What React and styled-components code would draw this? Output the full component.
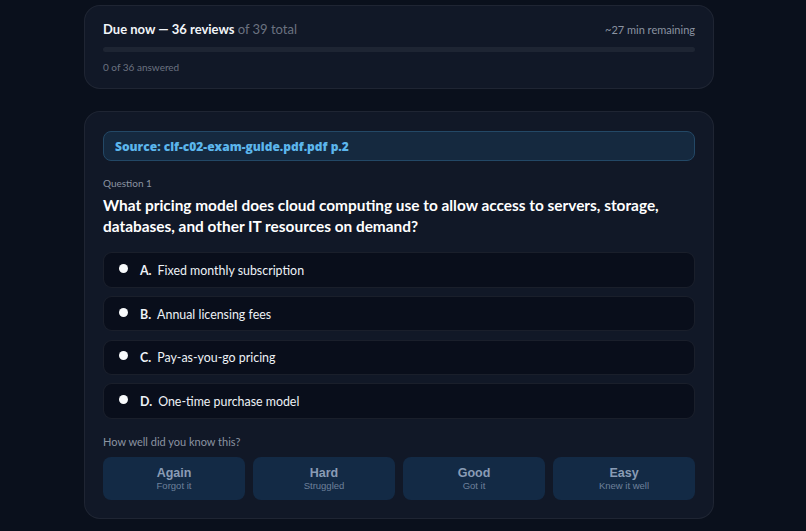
import styled, { createGlobalStyle } from "styled-components";

const GlobalStyle = createGlobalStyle`
    body {
        margin: 0;
        padding-right: 8px;
        background: #0a101c;
        font-family: Lato, "Open Sans", sans-serif;
        color: #e5e7eb;
    }
`

const Page = styled.div`
    width: 630px;
    margin: 0 auto;
    padding: 5px 0 12px;
    display: flex;
    flex-direction: column;
    gap: 22px;
`
const Card = styled.div`
    background: #111827;
    border: 1px solid rgba(255, 255, 255, 0.06);
    border-radius: 16px;
    padding: ${p => p.$pad};
`
const HeaderRow = styled.div`
    display: flex;
    justify-content: space-between;
    align-items: center;
    height: 20px;
`
const DueText = styled.div`
    font-size: 13px;
    font-weight: 700;
    color: #f1f5f9;
    span {
        font-weight: 400;
        color: #6b7280;
    }
`
const Remaining = styled.div`
    font-size: 11px;
    color: #8b93a1;
`
const Track = styled.div`
    height: 5px;
    border-radius: 3px;
    background: #1e2533;
    margin-top: 8px;
`
const Answered = styled.div`
    font-size: 10px;
    color: #6b7280;
    margin-top: 8px;
    line-height: 14px;
`
const Source = styled.div`
    height: 30px;
    box-sizing: border-box;
    display: flex;
    align-items: center;
    padding: 0 11px;
    background: #15293f;
    border: 1px solid #234866;
    border-radius: 8px;
    font-family: "Open Sans", sans-serif;
    font-size: 12px;
    font-weight: 800;
    color: #5cb6ec;
`
const QLabel = styled.div`
    font-size: 10px;
    color: #8b93a1;
    margin-top: 15px;
    line-height: 15px;
`
const QTitle = styled.div`
    font-size: 15.4px;
    font-weight: 700;
    color: #ffffff;
    line-height: 21px;
    margin-top: 4px;
`
const Options = styled.div`
    display: flex;
    flex-direction: column;
    gap: 8.3px;
    margin-top: 15px;
`
const Option = styled.div`
    height: 35.5px;
    box-sizing: border-box;
    display: flex;
    align-items: center;
    padding: 1px 0 0 15px;
    background: #090e1b;
    border: 1px solid rgba(255, 255, 255, 0.07);
    border-radius: 9px;
    font-size: 12.4px;
    color: #eef2f7;
`
const Dot = styled.span`
    width: 9px;
    height: 9px;
    border-radius: 50%;
    background: #f8fafc;
    margin-right: 12px;
    margin-top: -4px;
`
const Letter = styled.b`
    font-weight: 700;
    margin-right: 6px;
`
const Prompt = styled.div`
    font-size: 11px;
    color: #8b93a1;
    margin-top: 15px;
    line-height: 15px;
`
const Grades = styled.div`
    display: grid;
    grid-template-columns: repeat(4, 1fr);
    gap: 8px;
    margin-top: 8px;
`
const Grade = styled.button`
    height: 43px;
    border: none;
    border-radius: 8px;
    background: #132a45;
    font-family: "Liberation Sans", Arial, sans-serif;
    display: flex;
    flex-direction: column;
    align-items: center;
    justify-content: center;
    gap: 0;
    padding: 0;
`
const GradeName = styled.span`
    font-size: 12.5px;
    font-weight: 700;
    color: #8a9cb5;
`
const GradeHint = styled.span`
    font-size: 9.5px;
    color: #6e819b;
`

const options = [
    ["A.", "Fixed monthly subscription"],
    ["B.", "Annual licensing fees"],
    ["C.", "Pay-as-you-go pricing"],
    ["D.", "One-time purchase model"],
]
const grades = [
    ["Again", "Forgot it"],
    ["Hard", "Struggled"],
    ["Good", "Got it"],
    ["Easy", "Knew it well"],
]

export default function App() {
    return (
        <Page>
            <GlobalStyle />
            <Card $pad="13px 18px 14px">
                <HeaderRow>
                    <DueText>Due now — 36 reviews <span>of 39 total</span></DueText>
                    <Remaining>~27 min remaining</Remaining>
                </HeaderRow>
                <Track />
                <Answered>0 of 36 answered</Answered>
            </Card>
            <Card $pad="19px 18px 18px">
                <Source>Source: clf-c02-exam-guide.pdf.pdf p.2</Source>
                <QLabel>Question 1</QLabel>
                <QTitle>What pricing model does cloud computing use to allow access to servers, storage, databases, and other IT resources on demand?</QTitle>
                <Options>
                    {options.map(([l, t]) => (
                        <Option key={l}>
                            <Dot />
                            <Letter>{l}</Letter>
                            {t}
                        </Option>
                    ))}
                </Options>
                <Prompt>How well did you know this?</Prompt>
                <Grades>
                    {grades.map(([n, h]) => (
                        <Grade key={n}>
                            <GradeName>{n}</GradeName>
                            <GradeHint>{h}</GradeHint>
                        </Grade>
                    ))}
                </Grades>
            </Card>
        </Page>
    )
}
